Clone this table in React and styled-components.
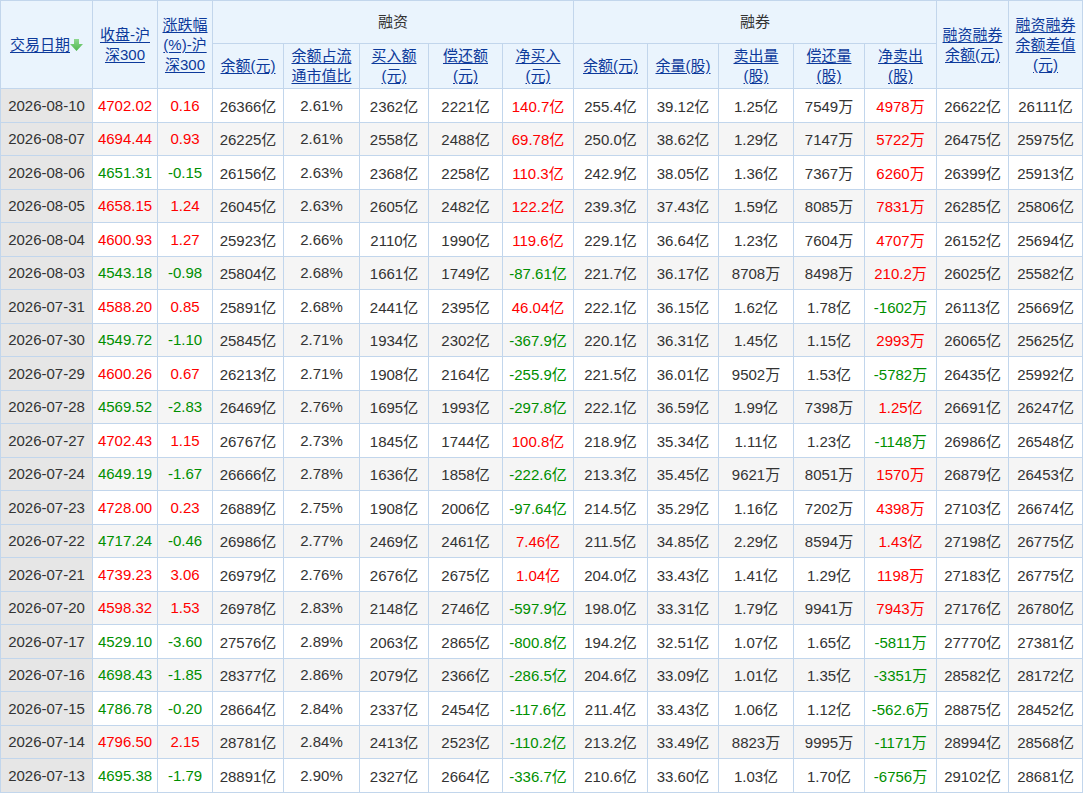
import React from "react";
import styled, { createGlobalStyle } from "styled-components";

const GlobalStyle = createGlobalStyle`
  html, body { margin: 0; padding: 0; background: #fff; }
  body { font-family: "Liberation Sans", Arial, "Noto Sans CJK SC", sans-serif; overflow: hidden; }
`;

const rows = [
  ["2026-08-10","4702.02","0.16","26366亿","2.61%","2362亿","2221亿","140.7亿","255.4亿","39.12亿","1.25亿","7549万","4978万","26622亿","26111亿"],
  ["2026-08-07","4694.44","0.93","26225亿","2.61%","2558亿","2488亿","69.78亿","250.0亿","38.62亿","1.29亿","7147万","5722万","26475亿","25975亿"],
  ["2026-08-06","4651.31","-0.15","26156亿","2.63%","2368亿","2258亿","110.3亿","242.9亿","38.05亿","1.36亿","7367万","6260万","26399亿","25913亿"],
  ["2026-08-05","4658.15","1.24","26045亿","2.63%","2605亿","2482亿","122.2亿","239.3亿","37.43亿","1.59亿","8085万","7831万","26285亿","25806亿"],
  ["2026-08-04","4600.93","1.27","25923亿","2.66%","2110亿","1990亿","119.6亿","229.1亿","36.64亿","1.23亿","7604万","4707万","26152亿","25694亿"],
  ["2026-08-03","4543.18","-0.98","25804亿","2.68%","1661亿","1749亿","-87.61亿","221.7亿","36.17亿","8708万","8498万","210.2万","26025亿","25582亿"],
  ["2026-07-31","4588.20","0.85","25891亿","2.68%","2441亿","2395亿","46.04亿","222.1亿","36.15亿","1.62亿","1.78亿","-1602万","26113亿","25669亿"],
  ["2026-07-30","4549.72","-1.10","25845亿","2.71%","1934亿","2302亿","-367.9亿","220.1亿","36.31亿","1.45亿","1.15亿","2993万","26065亿","25625亿"],
  ["2026-07-29","4600.26","0.67","26213亿","2.71%","1908亿","2164亿","-255.9亿","221.5亿","36.01亿","9502万","1.53亿","-5782万","26435亿","25992亿"],
  ["2026-07-28","4569.52","-2.83","26469亿","2.76%","1695亿","1993亿","-297.8亿","222.1亿","36.59亿","1.99亿","7398万","1.25亿","26691亿","26247亿"],
  ["2026-07-27","4702.43","1.15","26767亿","2.73%","1845亿","1744亿","100.8亿","218.9亿","35.34亿","1.11亿","1.23亿","-1148万","26986亿","26548亿"],
  ["2026-07-24","4649.19","-1.67","26666亿","2.78%","1636亿","1858亿","-222.6亿","213.3亿","35.45亿","9621万","8051万","1570万","26879亿","26453亿"],
  ["2026-07-23","4728.00","0.23","26889亿","2.75%","1908亿","2006亿","-97.64亿","214.5亿","35.29亿","1.16亿","7202万","4398万","27103亿","26674亿"],
  ["2026-07-22","4717.24","-0.46","26986亿","2.77%","2469亿","2461亿","7.46亿","211.5亿","34.85亿","2.29亿","8594万","1.43亿","27198亿","26775亿"],
  ["2026-07-21","4739.23","3.06","26979亿","2.76%","2676亿","2675亿","1.04亿","204.0亿","33.43亿","1.41亿","1.29亿","1198万","27183亿","26775亿"],
  ["2026-07-20","4598.32","1.53","26978亿","2.83%","2148亿","2746亿","-597.9亿","198.0亿","33.31亿","1.79亿","9941万","7943万","27176亿","26780亿"],
  ["2026-07-17","4529.10","-3.60","27576亿","2.89%","2063亿","2865亿","-800.8亿","194.2亿","32.51亿","1.07亿","1.65亿","-5811万","27770亿","27381亿"],
  ["2026-07-16","4698.43","-1.85","28377亿","2.86%","2079亿","2366亿","-286.5亿","204.6亿","33.09亿","1.01亿","1.35亿","-3351万","28582亿","28172亿"],
  ["2026-07-15","4786.78","-0.20","28664亿","2.84%","2337亿","2454亿","-117.6亿","211.4亿","33.43亿","1.06亿","1.12亿","-562.6万","28875亿","28452亿"],
  ["2026-07-14","4796.50","2.15","28781亿","2.84%","2413亿","2523亿","-110.2亿","213.2亿","33.49亿","8823万","9995万","-1171万","28994亿","28568亿"],
  ["2026-07-13","4695.38","-1.79","28891亿","2.90%","2327亿","2664亿","-336.7亿","210.6亿","33.60亿","1.03亿","1.70亿","-6756万","29102亿","28681亿"],
];

const widths = [92, 65, 55, 71, 76, 69, 74, 71, 74, 71, 75, 71, 72, 72, 74];

const BORDER = "#c2d6ec";

const Table = styled.table`
  border-collapse: collapse;
  table-layout: fixed;
  width: 1082px;
  font-size: 15px;
  color: #333;
`;

const HeadCell = styled.th`
  background: #eaf4fd;
  border: 1px solid ${BORDER};
  font-weight: normal;
  text-align: center;
  vertical-align: middle;
  padding: 0 2px;
  line-height: 20px;
  height: ${(p) => p.$h || 43}px;
  color: #333;
  box-sizing: border-box;
  font-family: "Liberation Sans", Arial, "Noto Sans CJK SC", sans-serif;
`;

const HeadLink = styled.a`
  color: #0d3a9b;
  text-decoration: underline;
  text-underline-offset: 2px;
  cursor: pointer;
`;

const Row = styled.tr`
  height: 33.5px;
  background: ${(p) => (p.$even ? "#f5f5f5" : "#ffffff")};
`;

const Cell = styled.td`
  border: 1px solid ${BORDER};
  text-align: center;
  vertical-align: middle;
  padding: 0;
  white-space: nowrap;
  color: ${(p) => (p.$tone === "up" ? "#ff0000" : p.$tone === "down" ? "#008f00" : "#333")};
`;

const DateCell = styled(Cell)`
  background: #e6e6e6;
`;

const SortArrow = styled.svg`
  width: 13px;
  height: 12px;
  vertical-align: -1px;
  margin-left: 0;
`;

function Arrow() {
  return (
    <SortArrow viewBox="0 0 13 12">
      <defs>
        <linearGradient id="ag" x1="0" y1="0" x2="0" y2="1">
          <stop offset="0" stopColor="#8fd88f" />
          <stop offset="1" stopColor="#4fb84f" />
        </linearGradient>
      </defs>
      <path d="M4 0 H9 V5 H13 L6.5 12 L0 5 H4 Z" fill="url(#ag)" />
    </SortArrow>
  );
}

const tone = (v) => (v.startsWith("-") ? "down" : "up");

export default function App() {
  return (
    <>
      <GlobalStyle />
      <Table>
        <colgroup>
          {widths.map((w, i) => (
            <col key={i} style={{ width: w }} />
          ))}
        </colgroup>
        <thead>
          <tr>
            <HeadCell rowSpan={2}>
              <HeadLink>交易日期</HeadLink>
              <Arrow />
            </HeadCell>
            <HeadCell rowSpan={2}>
              <HeadLink>收盘-沪<br />深300</HeadLink>
            </HeadCell>
            <HeadCell rowSpan={2}>
              <HeadLink>涨跌幅<br />(%)-沪<br />深300</HeadLink>
            </HeadCell>
            <HeadCell colSpan={5}>融资</HeadCell>
            <HeadCell colSpan={5}>融券</HeadCell>
            <HeadCell rowSpan={2}>
              <HeadLink>融资融券<br />余额(元)</HeadLink>
            </HeadCell>
            <HeadCell rowSpan={2}>
              <HeadLink>融资融券<br />余额差值<br />(元)</HeadLink>
            </HeadCell>
          </tr>
          <tr>
            <HeadCell $h={45}><HeadLink>余额(元)</HeadLink></HeadCell>
            <HeadCell $h={45}><HeadLink>余额占流<br />通市值比</HeadLink></HeadCell>
            <HeadCell $h={45}><HeadLink>买入额<br />(元)</HeadLink></HeadCell>
            <HeadCell $h={45}><HeadLink>偿还额<br />(元)</HeadLink></HeadCell>
            <HeadCell $h={45}><HeadLink>净买入<br />(元)</HeadLink></HeadCell>
            <HeadCell $h={45}><HeadLink>余额(元)</HeadLink></HeadCell>
            <HeadCell $h={45}><HeadLink>余量(股)</HeadLink></HeadCell>
            <HeadCell $h={45}><HeadLink>卖出量<br />(股)</HeadLink></HeadCell>
            <HeadCell $h={45}><HeadLink>偿还量<br />(股)</HeadLink></HeadCell>
            <HeadCell $h={45}><HeadLink>净卖出<br />(股)</HeadLink></HeadCell>
          </tr>
        </thead>
        <tbody>
          {rows.map((r, i) => {
            const t = tone(r[2]);
            return (
              <Row key={r[0]} $even={i % 2 === 1}>
                <DateCell>{r[0]}</DateCell>
                <Cell $tone={t}>{r[1]}</Cell>
                <Cell $tone={t}>{r[2]}</Cell>
                <Cell>{r[3]}</Cell>
                <Cell>{r[4]}</Cell>
                <Cell>{r[5]}</Cell>
                <Cell>{r[6]}</Cell>
                <Cell $tone={tone(r[7])}>{r[7]}</Cell>
                <Cell>{r[8]}</Cell>
                <Cell>{r[9]}</Cell>
                <Cell>{r[10]}</Cell>
                <Cell>{r[11]}</Cell>
                <Cell $tone={tone(r[12])}>{r[12]}</Cell>
                <Cell>{r[13]}</Cell>
                <Cell>{r[14]}</Cell>
              </Row>
            );
          })}
        </tbody>
      </Table>
    </>
  );
}
